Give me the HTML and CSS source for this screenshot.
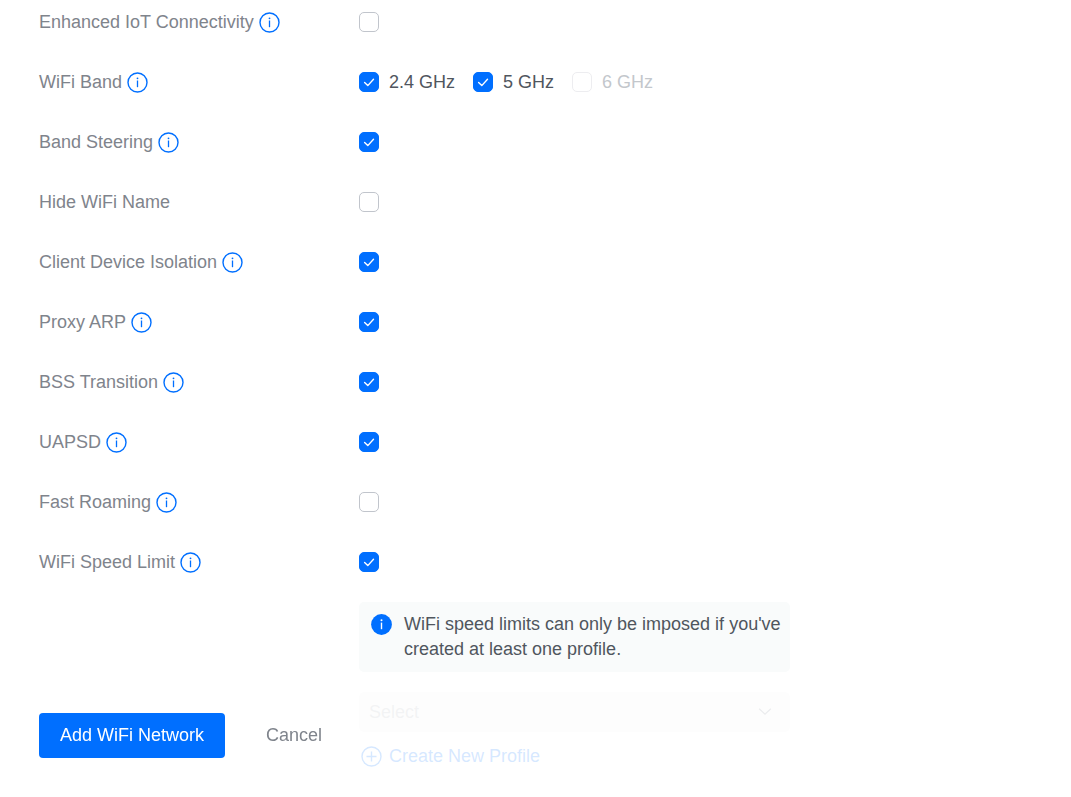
FILE: index.html
```html
<!DOCTYPE html>
<html lang="en">
<head>
<meta charset="utf-8">
<title>Add WiFi Network</title>
<link rel="stylesheet" href="styles.css">
</head>
<body>
<svg class="sprite" aria-hidden="true">
  <symbol id="info" viewBox="0 0 21 21"><circle cx="10.5" cy="10.5" r="9.5" fill="none" stroke="currentColor" stroke-width="1.4"/><path d="M10.5 8.5V15.2" stroke="currentColor" stroke-width="1.3"/><circle cx="10.5" cy="6.3" r=".9" fill="currentColor"/></symbol>
  <symbol id="info-solid" viewBox="0 0 21 21"><circle cx="10.5" cy="10.5" r="10.4" fill="currentColor"/><path d="M10.5 8.6V15.2" stroke="#fff" stroke-width="1.4"/><circle cx="10.5" cy="6.3" r="1" fill="#fff"/></symbol>
  <symbol id="tick" viewBox="0 0 20 20"><path d="M5.6 10.4l3.2 3.2 5.7-6.4" fill="none" stroke="#fff" stroke-width="1.4" stroke-linecap="round" stroke-linejoin="round"/></symbol>
  <symbol id="plus" viewBox="0 0 21 21"><circle cx="10.5" cy="10.5" r="9.5" fill="none" stroke="currentColor" stroke-width="1.4"/><path d="M10.5 5.5v10M5.5 10.5h10" stroke="currentColor" stroke-width="1.4"/></symbol>
  <symbol id="chevron" viewBox="0 0 14 14"><path d="M1.2 3.8L7 9.2l5.8-5.4" fill="none" stroke="currentColor" stroke-width="1.2"/></symbol>
</svg>
<form class="form">
  <main class="fields">
    <div class="row">
      <div class="name"><label for="iot">Enhanced IoT Connectivity</label><svg class="icon"><use href="#info"/></svg></div>
      <span class="check"><input type="checkbox" id="iot"><svg><use href="#tick"/></svg></span>
    </div>
    <div class="row" role="group" aria-labelledby="band">
      <div class="name"><span id="band">WiFi Band</span><svg class="icon"><use href="#info"/></svg></div>
      <div class="options">
        <label class="option"><span class="check"><input type="checkbox" checked><svg><use href="#tick"/></svg></span>2.4 GHz</label>
        <label class="option"><span class="check"><input type="checkbox" checked><svg><use href="#tick"/></svg></span>5 GHz</label>
        <label class="option option-off"><span class="check"><input type="checkbox" disabled><svg><use href="#tick"/></svg></span>6 GHz</label>
      </div>
    </div>
    <div class="row">
      <div class="name"><label for="steering">Band Steering</label><svg class="icon"><use href="#info"/></svg></div>
      <span class="check"><input type="checkbox" id="steering" checked><svg><use href="#tick"/></svg></span>
    </div>
    <div class="row">
      <div class="name"><label for="hide">Hide WiFi Name</label></div>
      <span class="check"><input type="checkbox" id="hide"><svg><use href="#tick"/></svg></span>
    </div>
    <div class="row">
      <div class="name"><label for="isolation">Client Device Isolation</label><svg class="icon"><use href="#info"/></svg></div>
      <span class="check"><input type="checkbox" id="isolation" checked><svg><use href="#tick"/></svg></span>
    </div>
    <div class="row">
      <div class="name"><label for="arp">Proxy ARP</label><svg class="icon"><use href="#info"/></svg></div>
      <span class="check"><input type="checkbox" id="arp" checked><svg><use href="#tick"/></svg></span>
    </div>
    <div class="row">
      <div class="name"><label for="bss">BSS Transition</label><svg class="icon"><use href="#info"/></svg></div>
      <span class="check"><input type="checkbox" id="bss" checked><svg><use href="#tick"/></svg></span>
    </div>
    <div class="row">
      <div class="name"><label for="uapsd">UAPSD</label><svg class="icon"><use href="#info"/></svg></div>
      <span class="check"><input type="checkbox" id="uapsd" checked><svg><use href="#tick"/></svg></span>
    </div>
    <div class="row">
      <div class="name"><label for="roaming">Fast Roaming</label><svg class="icon"><use href="#info"/></svg></div>
      <span class="check"><input type="checkbox" id="roaming"><svg><use href="#tick"/></svg></span>
    </div>
    <div class="row">
      <div class="name"><label for="limit">WiFi Speed Limit</label><svg class="icon"><use href="#info"/></svg></div>
      <span class="check"><input type="checkbox" id="limit" checked><svg><use href="#tick"/></svg></span>
    </div>
    <div class="row row-detail">
      <div class="detail">
        <div class="notice"><svg class="icon"><use href="#info-solid"/></svg><p>WiFi speed limits can only be imposed if you've created at least one profile.</p></div>
        <div class="picker">
          <select aria-label="Speed limit profile" disabled><option>Select</option></select>
          <svg class="chevron"><use href="#chevron"/></svg>
        </div>
        <a class="create" href="#"><svg class="icon"><use href="#plus"/></svg>Create New Profile</a>
      </div>
    </div>
  </main>
  <footer class="actions">
    <button class="primary" type="submit">Add WiFi Network</button>
    <button class="plain" type="button">Cancel</button>
  </footer>
</form>
</body>
</html>
```

FILE: styles.css
```css
* {
  box-sizing: border-box;
}

body {
  margin: 0;
  background: #fff;
  color: #50565e;
  font: 18px/25px "Liberation Sans", Arial, sans-serif;
}

.sprite {
  position: absolute;
  width: 0;
  height: 0;
}

.fields {
  display: flex;
  flex-direction: column;
  gap: 16px;
  padding: 0 39px 28px;
}

.row {
  display: grid;
  grid-template-columns: 320px minmax(0, 1fr);
  align-items: center;
  min-height: 44px;
}

.name {
  display: flex;
  align-items: center;
  gap: 5px;
  color: #7f848c;
}

.icon {
  flex: none;
  width: 21px;
  height: 21px;
  color: #006fff;
}

.options {
  display: flex;
  gap: 18px;
}

.option {
  display: flex;
  align-items: center;
  gap: 10px;
}

.option-off {
  color: #c3c7cc;
}

.check {
  display: grid;
  width: 20px;
  height: 20px;
}

.check > * {
  grid-area: 1 / 1;
  width: 20px;
  height: 20px;
}

.check input {
  appearance: none;
  margin: 0;
  border: 1px solid #c1c5cc;
  border-radius: 5px;
  background: #fff;
}

.check input:checked {
  border-color: #006fff;
  background: #006fff;
}

.check input:disabled {
  border-color: #ededf0;
}

.check svg {
  visibility: hidden;
  pointer-events: none;
}

.check input:checked + svg {
  visibility: visible;
}

.row-detail .detail {
  grid-column: 2;
  max-width: 431px;
  padding-top: 2px;
}

.notice {
  display: flex;
  gap: 12px;
  padding: 10px 4px 10px 12px;
  border-radius: 5px;
  background: #f9fbfb;
}

.notice .icon {
  margin-top: 2px;
}

.notice p {
  margin: 0;
}

.picker {
  display: grid;
  align-items: center;
  margin-top: 20px;
}

.picker > * {
  grid-area: 1 / 1;
}

.picker select {
  appearance: none;
  width: 100%;
  height: 40px;
  padding: 0 10px;
  border: 0;
  border-radius: 5px;
  background: #f2f2f2;
  color: #b0b4ba;
  font: inherit;
  opacity: 1;
}

.chevron {
  justify-self: end;
  width: 14px;
  height: 14px;
  margin-right: 18px;
  color: #808893;
  pointer-events: none;
}

.create {
  display: inline-flex;
  align-items: center;
  gap: 7px;
  margin-top: 12px;
  padding-left: 2px;
  color: #006fff;
  text-decoration: none;
}

.actions {
  position: fixed;
  right: 0;
  bottom: 0;
  left: 0;
  display: flex;
  gap: 20px;
  padding: 21px 39px 39px;
  background: rgba(255, 255, 255, 0.84);
}

.actions button {
  height: 45px;
  padding: 0 21px;
  border: 0;
  border-radius: 4px;
  font: inherit;
}

.primary {
  background: #006fff;
  color: #fff;
}

.plain {
  background: none;
  color: #7f848c;
}
```
